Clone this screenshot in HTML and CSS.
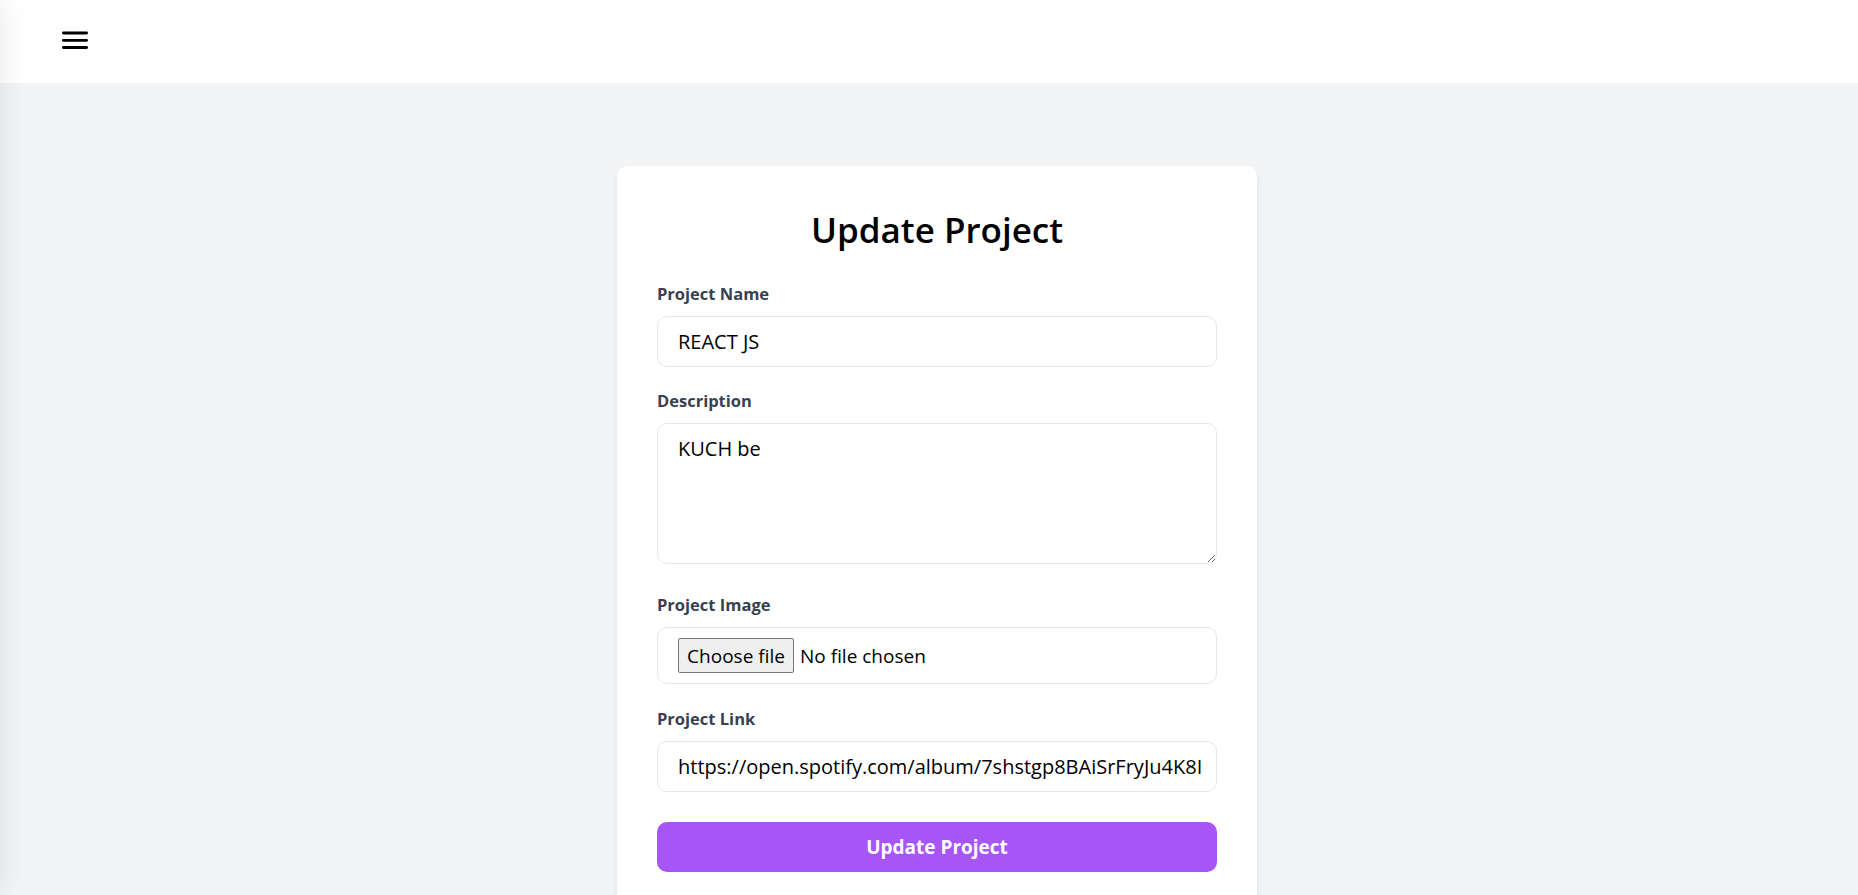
FILE: index.html
```html
<!DOCTYPE html>
<html lang="en">
<head>
<meta charset="utf-8">
<title>Update Project</title>
<link rel="stylesheet" href="styles.css">
</head>
<body>
<aside class="sidebar"></aside>
<header class="topbar">
  <button class="menu-btn" type="button" aria-label="Menu">
    <svg width="26" height="20" viewBox="0 0 26 20" aria-hidden="true">
      <rect x="0" y="1.6" width="26" height="2.8" rx="1.4" fill="#000"/>
      <rect x="0" y="8.9" width="26" height="2.8" rx="1.4" fill="#000"/>
      <rect x="0" y="16.1" width="26" height="2.8" rx="1.4" fill="#000"/>
    </svg>
  </button>
</header>
<main class="main">
  <form class="card">
    <h1 class="title">Update Project</h1>
    <div class="field">
      <label class="label" for="name">Project Name</label>
      <input class="input" id="name" type="text" value="REACT JS">
    </div>
    <div class="field field-tall">
      <label class="label" for="desc">Description</label>
      <textarea class="input textarea" id="desc">KUCH be</textarea>
    </div>
    <div class="field field-file">
      <label class="label" for="img">Project Image</label>
      <div class="input file-box">
        <span class="file-btn">Choose file</span>
        <span class="file-text">No file chosen</span>
      </div>
    </div>
    <div class="field">
      <label class="label" for="link">Project Link</label>
      <input class="input" id="link" type="text" value="https://open.spotify.com/album/7shstgp8BAiSrFryJu4K8I">
    </div>
    <button class="submit" type="button">Update Project</button>
  </form>
</main>
</body>
</html>
```
FILE: styles.css
```css
* { box-sizing: border-box; }
html, body { margin: 0; height: 100%; }
body {
  background: #f3f4f6;
  font-family: "Open Sans", "Noto Sans", sans-serif;
  color: #000;
  overflow: hidden;
}
.sidebar {
  position: fixed;
  top: 0;
  left: -256px;
  width: 256px;
  height: 100%;
  background: #fff;
  box-shadow: 0 0 28px rgba(0, 0, 0, 0.10);
  z-index: 5;
}
.topbar {
  height: 83px;
  background: #fff;
  display: flex;
  align-items: flex-start;
  padding: 30px 0 0 62px;
}
.menu-btn {
  border: 0;
  background: none;
  padding: 0;
  display: flex;
}
.main {
  padding-left: 16px;
  padding-top: 83px;
}
.card {
  width: 640px;
  margin: 0 auto;
  background: #fff;
  border-radius: 10px;
  padding: 40px;
  box-shadow: 0 4px 8px rgba(0, 0, 0, 0.06), 0 2px 4px rgba(0, 0, 0, 0.04);
}
.title {
  margin: 0 0 27px;
  text-align: center;
  font-size: 35px;
  font-weight: 600;
  line-height: 48px;
}
.field { margin-bottom: 21px; }
.field-tall { margin-bottom: 28px; }
.field-file { margin-bottom: 22px; }
.label {
  display: block;
  font-size: 16.5px;
  font-weight: 700;
  color: #374151;
  line-height: 26px;
  margin-bottom: 9px;
}
.input {
  display: block;
  width: 100%;
  height: 51px;
  border: 1px solid #e5e7eb;
  border-radius: 10px;
  padding: 0 6px 0 20px;
  font-family: inherit;
  font-size: 20px;
  color: #000;
  background: #fff;
  outline: none;
}
.textarea {
  height: 141px;
  padding-top: 11px;
  resize: vertical;
}
.file-box {
  height: 57px;
  display: flex;
  align-items: center;
  gap: 6px;
}
.file-btn {
  height: 35px;
  width: 116px;
  display: flex;
  align-items: center;
  justify-content: center;
  background: #efefef;
  border: 1px solid #767676;
  border-radius: 2px;
  font-size: 19px;
}
.file-text { font-size: 19px; }
.submit {
  display: block;
  width: 100%;
  height: 50px;
  margin-top: 30px;
  border: 0;
  border-radius: 10px;
  background: #a855f7;
  color: #fff;
  font-family: inherit;
  font-size: 19px;
  font-weight: 700;
}
```
